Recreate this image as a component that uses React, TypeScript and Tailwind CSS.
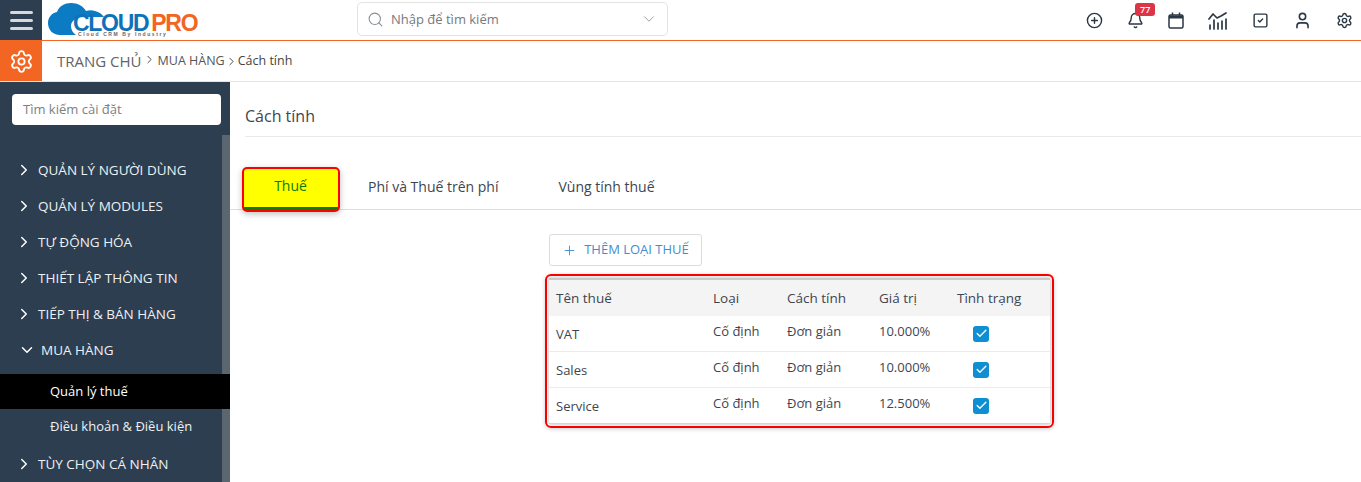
import { ChevronDown, ChevronRight, Plus, Search, Settings, User, Bell, SquareCheck, CirclePlus, Check } from "lucide-react";

const menuTop = ["QUẢN LÝ NGƯỜI DÙNG", "QUẢN LÝ MODULES", "TỰ ĐỘNG HÓA", "THIẾT LẬP THÔNG TIN", "TIẾP THỊ & BÁN HÀNG"];

const taxes = [
  { name: "VAT", value: "10.000%" },
  { name: "Sales", value: "10.000%" },
  { name: "Service", value: "12.500%" },
];

function Logo() {
  return (
    <div className="relative ml-[6px] h-[40px] w-[152px]">
      <svg className="absolute left-0 top-[2px]" width="64" height="33" viewBox="0 0 64 33">
        <path
          d="M12 33C5 33 0 28 0 21c0-6 4-10 9-11C11 4 17 1 23 1c7 0 12 3 15 8 3-1 6-1 9 0 4 1 7 3 9 6H36c-8 0-13 4-13 9 0 4 2 7 5 9H12z"
          fill="#0b7bc4"
        />
      </svg>
      <div className="absolute left-[25px] top-[10px] flex text-[23px] font-bold leading-[26px] tracking-[-1.3px] font-['Liberation_Sans',sans-serif]">
        <span className="text-[#0f72b8]">CLOUD</span>
        <span className="ml-[3px] text-[#f26522]">PRO</span>
      </div>
      <div className="absolute left-[30px] top-[31px] whitespace-nowrap text-[5px] font-bold leading-[6px] tracking-[1.6px] text-[#666] font-['Liberation_Sans',sans-serif]">
        Cloud CRM By Industry
      </div>
    </div>
  );
}

function ChartIcon() {
  return (
    <svg width="20" height="18" viewBox="0 0 20 18" fill="none" stroke="#2b3744" strokeWidth="1.7" strokeLinecap="round" strokeLinejoin="round">
      <path d="M1 7l4-5 4 4 4-2 5-3" />
      <path d="M2 13v4M6 8v9M10 11v6M14 9v8M18 7v10" />
    </svg>
  );
}

function CalendarIcon() {
  return (
    <svg width="16" height="17" viewBox="0 0 16 17" fill="none" stroke="#2b3744" strokeWidth="1.5">
      <rect x="1" y="3" width="14" height="13" rx="1.5" />
      <path d="M1 5h14" strokeWidth="3" />
      <path d="M4.5 0.5v3M11.5 0.5v3" strokeWidth="1.5" />
    </svg>
  );
}

function Header() {
  return (
    <header className="flex h-[41px] items-start border-b border-[#f26522] bg-white">
      <div className="flex h-[40px] w-[42px] flex-col items-center justify-center gap-[5px] bg-[#2c3e50]">
        <span className="h-[3px] w-[23px] rounded-full bg-[#d5d8dc]" />
        <span className="h-[3px] w-[23px] rounded-full bg-[#d5d8dc]" />
        <span className="h-[3px] w-[23px] rounded-full bg-[#d5d8dc]" />
      </div>
      <Logo />
      <div className="ml-[157px] mt-[2px] flex h-[34px] w-[311px] items-center rounded-[5px] border border-[#e3e3e3] pl-[9px] pr-[9px]">
        <Search size={17} strokeWidth={1.5} className="text-[#8a8f94]" />
        <span className="ml-[7px] flex-1 pt-px text-[13px] text-[#76797d]">Nhập để tìm kiếm</span>
        <ChevronDown size={18} strokeWidth={1.25} className="text-[#9a9a9a]" />
      </div>
      <div className="ml-auto mr-[8px] mt-[11px] flex items-center gap-[24px] text-[#2b3744]">
        <CirclePlus size={17} strokeWidth={2} />
        <div className="relative">
          <Bell size={17} strokeWidth={2} />
          <span className="absolute left-[8px] top-[-9px] rounded-[3px] bg-[#dc3545] px-[5px] text-[9px] font-semibold leading-[13px] text-white">77</span>
        </div>
        <CalendarIcon />
        <ChartIcon />
        <SquareCheck size={17} strokeWidth={2} />
        <User size={19} strokeWidth={2} />
        <Settings size={17} strokeWidth={2} />
      </div>
    </header>
  );
}

function Breadcrumb() {
  return (
    <div className="flex h-[41px] items-center border-b border-[#e5e5e5] bg-white">
      <div className="flex h-[40px] w-[42px] items-center justify-center bg-[#f26522]">
        <Settings size={25} strokeWidth={1.75} className="text-white" />
      </div>
      <span className="ml-[15px] text-[15px] text-[#5f6468]">TRANG CHỦ</span>
      <ChevronRight size={13} strokeWidth={1.75} className="ml-[1px] mb-[4px] text-[#444]" />
      <span className="ml-[2px] text-[12.5px] text-[#555]">MUA HÀNG</span>
      <ChevronRight size={13} strokeWidth={1.75} className="text-[#444]" />
      <span className="text-[12.5px] text-[#444]">Cách tính</span>
    </div>
  );
}

function MenuRow({ label }: { label: string }) {
  return (
    <div className="flex h-[36px] items-center pl-[15px] text-[13.5px] text-[#eef1f3]">
      <ChevronRight size={18} strokeWidth={2} className="text-white" />
      <span className="ml-[5px]">{label}</span>
    </div>
  );
}

function Sidebar() {
  return (
    <aside className="relative flex h-[400px] w-[230px] shrink-0 flex-col overflow-hidden bg-[#2c3e50]">
      <div className="absolute bottom-0 right-0 top-[53px] w-[8px] bg-[#5a6670]" />
      <div className="mx-[12px] mt-[12px] flex h-[31px] w-[209px] items-center rounded-[4px] bg-white px-[11px] pt-px text-[13px] text-[#7b7f83]">
        Tìm kiếm cài đặt
      </div>
      <div className="relative mt-[27px]">
        {menuTop.map((label) => (
          <MenuRow key={label} label={label} />
        ))}
        <div className="flex h-[36px] items-center pl-[18px] text-[13.5px] text-[#eef1f3]">
          <ChevronDown size={18} strokeWidth={2} className="text-white" />
          <span className="ml-[5px]">MUA HÀNG</span>
        </div>
        <div className="relative mt-[6px] flex h-[35px] items-center bg-black pl-[50px] text-[13px] text-white">Quản lý thuế</div>
        <div className="flex h-[35px] items-center pl-[50px] text-[13px] text-[#eef1f3]">Điều khoản &amp; Điều kiện</div>
        <div className="mt-[2px]">
          <MenuRow label="TÙY CHỌN CÁ NHÂN" />
        </div>
      </div>
    </aside>
  );
}

function Tabs() {
  return (
    <div className="relative mt-[30px] flex h-[43px] items-start border-b border-[#dedede] pl-[13px] text-[14px] font-medium text-[#3d4650]">
      <div className="absolute left-[12px] top-0 h-[45px] w-[98px] rounded-[5px] border-2 border-[#f00] shadow-[0_2px_6px_rgba(0,0,0,0.25)]" />
      <div className="mt-px flex h-[42px] w-[95px] items-center justify-center border-b-[3px] border-[#0a7d0a] bg-[#ffff00] pb-[4px] text-[#0a7d0a]">Thuế</div>
      <div className="ml-[30px] mt-[9px]">Phí và Thuế trên phí</div>
      <div className="ml-[60px] mt-[9px]">Vùng tính thuế</div>
    </div>
  );
}

function TaxTable() {
  return (
    <div className="ml-[315px] mt-[8px] w-[509px] rounded-[6px] border-2 border-[#f00] p-[2px] shadow-[0_1px_4px_rgba(0,0,0,0.2)]">
      <div className="border-t-2 border-[#c9c9c9] shadow-[0_0_4px_rgba(0,0,0,0.3)]">
        <div className="grid h-[36px] grid-cols-[157px_74px_92px_78px_1fr] items-center bg-[#f4f4f4] pl-[7px] text-[13.5px] text-[#3d4650]">
          <span>Tên thuế</span>
          <span>Loại</span>
          <span>Cách tính</span>
          <span>Giá trị</span>
          <span>Tình trạng</span>
        </div>
        {taxes.map((tax) => (
          <div key={tax.name} className="grid h-[36px] grid-cols-[157px_74px_92px_78px_1fr] items-center border-b border-[#ececec] bg-white pl-[7px] text-[13px] text-[#3d4650] last:border-b-[#d5d5d5]">
            <span className="pt-[2px]">{tax.name}</span>
            <span className="pb-[3px]">Cố định</span>
            <span className="pb-[3px]">Đơn giản</span>
            <span className="pb-[3px]">{tax.value}</span>
            <span className="pl-[16px]">
              <span className="flex h-[16px] w-[16px] items-center justify-center rounded-[3px] bg-[#0e8fd1]">
                <Check size={13} strokeWidth={2.5} className="text-white" />
              </span>
            </span>
          </div>
        ))}
      </div>
    </div>
  );
}

export default function App() {
  return (
    <div className="h-[482px] w-[1361px] overflow-hidden bg-white font-['Open_Sans','Noto_Sans',sans-serif]">
      <Header />
      <Breadcrumb />
      <div className="flex">
        <Sidebar />
        <main className="flex-1">
          <div className="ml-[15px] flex h-[55px] items-end border-b border-[#e9e9e9] pb-[8px] text-[16px] font-medium text-[#3d4650]">Cách tính</div>
          <Tabs />
          <button className="ml-[319px] mt-[24px] flex h-[32px] w-[153px] items-center justify-center gap-[7px] rounded-[3px] border border-[#dcdcdc] text-[13px] text-[#3f8fd0]">
            <Plus size={15} strokeWidth={1.5} />
            THÊM LOẠI THUẾ
          </button>
          <TaxTable />
        </main>
      </div>
    </div>
  );
}
